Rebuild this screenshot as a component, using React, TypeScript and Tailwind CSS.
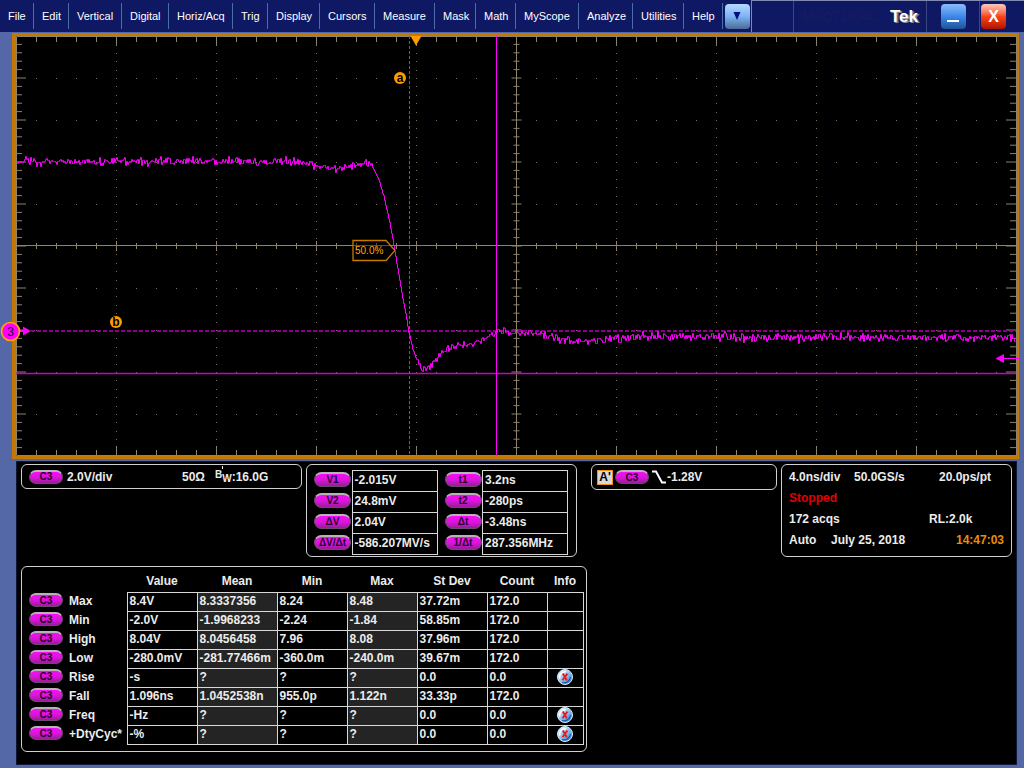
import type { ReactNode } from 'react';

const MENU: [string, string][] = [
  ['File', 'w-[34px]'],
  ['Edit', 'w-[35px]'],
  ['Vertical', 'w-[53px]'],
  ['Digital', 'w-[47px]'],
  ['Horiz/Acq', 'w-[64px]'],
  ['Trig', 'w-[35px]'],
  ['Display', 'w-[52px]'],
  ['Cursors', 'w-[55px]'],
  ['Measure', 'w-[60px]'],
  ['Mask', 'w-[41px]'],
  ['Math', 'w-[40px]'],
  ['MyScope', 'w-[63px]'],
  ['Analyze', 'w-[54px]'],
  ['Utilities', 'w-[51px]'],
  ['Help', 'w-[39px]'],
];

const HEADERS: [string, string][] = [
  ['Value', 'w-[70px]'],
  ['Mean', 'w-[80px]'],
  ['Min', 'w-[70px]'],
  ['Max', 'w-[70px]'],
  ['St Dev', 'w-[70px]'],
  ['Count', 'w-[60px]'],
];

const ROWS: { name: string; cells: string[]; info?: boolean }[] = [
  { name: 'Max', cells: ['8.4V', '8.3337356', '8.24', '8.48', '37.72m', '172.0'] },
  { name: 'Min', cells: ['-2.0V', '-1.9968233', '-2.24', '-1.84', '58.85m', '172.0'] },
  { name: 'High', cells: ['8.04V', '8.0456458', '7.96', '8.08', '37.96m', '172.0'] },
  { name: 'Low', cells: ['-280.0mV', '-281.77466m', '-360.0m', '-240.0m', '39.67m', '172.0'] },
  { name: 'Rise', cells: ['-s', '?', '?', '?', '0.0', '0.0'], info: true },
  { name: 'Fall', cells: ['1.096ns', '1.0452538n', '955.0p', '1.122n', '33.33p', '172.0'] },
  { name: 'Freq', cells: ['-Hz', '?', '?', '?', '0.0', '0.0'], info: true },
  { name: '+DtyCyc*', cells: ['-%', '?', '?', '?', '0.0', '0.0'], info: true },
];

/* Graticule: 10 x 10 divisions, 100 x 42 units each, 5 minor ticks per division. */
function graticule() {
  let ticks = '';
  let dots = '';
  for (let i = 1; i < 50; i++) {
    const x = i * 20 + 0.5;
    const long = i % 5 === 0;
    const edge = long ? 10 : 6;
    const mid = long ? 5 : 3;
    ticks += `M${x} 0V${edge}M${x} ${420 - edge}V420M${x} ${210 - mid}V${210 + mid}`;
    const y = Math.round(i * 84) / 10;
    const side = long ? 10 : 6;
    const cm = long ? 5 : 3;
    ticks += `M0 ${y}H${side}M${1000 - side} ${y}H1000M${500.5 - cm} ${y}H${500.5 + cm}`;
  }
  for (let r = 1; r < 10; r++) {
    if (r === 5) continue;
    for (let i = 1; i < 50; i++) dots += `M${i * 20} ${r * 42 + 0.5}h1`;
  }
  for (let c = 1; c < 10; c++) {
    if (c === 5) continue;
    for (let i = 1; i < 50; i++) dots += `M${c * 100} ${Math.round(i * 8.4) + 0.5}h1`;
  }
  return { ticks, dots };
}

const SHAPE: [number, number][] = [
  [0, 125], [284, 125], [300, 129], [318, 132], [334, 129], [350, 127], [357, 131], [363, 143],
  [368, 160], [374, 186], [379, 214], [384, 244], [389, 273], [393, 295], [397, 313],
  [402, 326], [409, 334], [416, 328], [429, 314], [444, 309], [464, 305], [474, 300],
  [482, 296], [514, 295], [529, 300], [554, 304], [584, 304], [624, 300], [700, 301], [1000, 301],
];

function waveform() {
  let seed = 11;
  const rand = () => {
    seed = (seed * 1103515245 + 12345) % 2147483648;
    return seed / 2147483648;
  };
  let s = 0;
  let d = '';
  for (let x = 1; x < 1000; x++) {
    while (s < SHAPE.length - 2 && SHAPE[s + 1][0] < x) s++;
    const [x0, y0] = SHAPE[s];
    const [x1, y1] = SHAPE[s + 1];
    const base = y0 + ((y1 - y0) * (x - x0)) / (x1 - x0);
    const steep = x > 357 && x < 402;
    const n = (rand() + rand() + rand() - 1.5) * (steep ? 1 : 4);
    const spike = !steep && rand() > 0.97 ? (rand() - 0.5) * 7 : 0;
    const y = Math.round(base + n + spike) + 0.5;
    d += x === 1 ? `M1.5 ${y}` : `V${y}H${x + 0.5}`;
  }
  return d;
}

const GRID = graticule();
const TRACE = waveform();

function Pill({ children, wide = false }: { children: ReactNode; wide?: boolean }) {
  return (
    <span
      className={`flex items-center justify-center rounded-full border border-t-2 border-[#6b4a6b] border-t-[#b9b3b9] bg-linear-to-b from-[#f80cf8] via-[#dc14dc] to-[#9a1a9a] text-[10px] leading-none font-bold text-[#240028] ${
        wide ? 'h-[15px] w-[37px]' : 'h-[14px] w-[34px]'
      }`}
    >
      {children}
    </span>
  );
}

function InfoIcon() {
  return (
    <svg viewBox="0 0 16 16" className="mx-auto block size-4" role="img" aria-label="Warning">
      <defs>
        <linearGradient id="info" x1="0" y1="0" x2="1" y2="1">
          <stop offset="0" stopColor="#ffffff" />
          <stop offset="0.4" stopColor="#9fd0f5" />
          <stop offset="1" stopColor="#1f6fd0" />
        </linearGradient>
      </defs>
      <circle cx="8" cy="8" r="7.5" fill="url(#info)" stroke="#dcecfb" />
      <path d="M2.8 9.5A5.4 5.4 0 0 1 9 2.8" stroke="#fff" strokeWidth="1.4" fill="none" />
      <path d="M5 13.5a6.5 6.5 0 0 0 8.500-5.500" stroke="#1557a8" strokeWidth="1.2" fill="none" />
      <path d="M5.8 4.6L9.8 11.2M10.4 4.6L5.4 11.2" stroke="#f01818" strokeWidth="1.9" />
    </svg>
  );
}

function Readouts({ items }: { items: [string, string][] }) {
  return (
    <table className="border-collapse">
      <tbody>
        {items.map(([label, value]) => (
          <tr key={label} className="h-[21px]">
            <th scope="row" className="w-[38px] p-0 pb-[3px] align-middle">
              <Pill wide>{label}</Pill>
            </th>
            <td className="w-[85px] border border-[#d8d8d8] p-0 pb-0.5 pl-0.5 text-left">{value}</td>
          </tr>
        ))}
      </tbody>
    </table>
  );
}

function Screen() {
  return (
    <svg viewBox="0 0 1000 420" className="block h-auto w-full overflow-visible bg-black" role="img" aria-label="Channel 3 waveform">
      <path d={GRID.ticks} stroke="#8f836b" fill="none" />
      <path d={GRID.dots} stroke="#7a705c" fill="none" />
      <path d="M0 209.5H1000M500.5 0V420" stroke="#8f836b" fill="none" />
      <path d="M0.5 0.5H1000.5V419.5H0.5Z" stroke="#8f836b" fill="none" />

      <path d="M15 295H1000" stroke="#8c008c" strokeWidth="2" strokeDasharray="4 2" />
      <path d="M0 337.5H1000" stroke="#c800c8" strokeWidth="1.4" />
      <path d="M480.5 0V420" stroke="#ff00ff" />
      <path d="M393.5 0V420" stroke="#f000f0" strokeDasharray="3 2" />
      <path d={TRACE} stroke="#f000f0" fill="none" />

      <path d="M394.5 0H405.5L400 9.5Z" fill="#ff9c00" />
      <circle cx="384" cy="42" r="6" fill="#ff9c00" />
      <text x="384" y="46" textAnchor="middle" className="text-[12px] font-bold" fill="#000">a</text>
      <circle cx="100" cy="286" r="6" fill="#ff9c00" />
      <text x="100" y="290" textAnchor="middle" className="text-[12px] font-bold" fill="#000">b</text>

      <path d="M337 204.5H370L379 214.5L370 224.5H337Z" stroke="#c87800" strokeWidth="1.3" fill="#000" fillOpacity="0.4" />
      <text x="339" y="218" className="text-[10px]" fill="#ffa500">50.0%</text>

      <path d="M4 295H9" stroke="#ff00ff" strokeWidth="2" />
      <path d="M7 290.5V299.5L15 295Z" fill="#ff00ff" />
      <circle cx="-5.5" cy="295.5" r="9" fill="#ff00ff" stroke="#ffa500" strokeWidth="1.7" />
      <text x="-5.5" y="299.5" textAnchor="middle" className="text-[12px]" fill="#200020">3</text>
      <path d="M1003 322.5H985" stroke="#ff00ff" />
      <path d="M979.5 322.5L988 318V327Z" fill="#ff00ff" />
    </svg>
  );
}

export default function App() {
  return (
    <div className="min-h-screen bg-[#5468a8] pb-[3px] font-['Liberation_Sans',Arial,sans-serif] text-[12px] leading-4 text-[#ececec]">
      <header className="flex h-8 items-stretch bg-[#0f1863] text-[11px] text-white">
        <nav className="flex items-center">
          {MENU.map(([label, width]) => (
            <button
              key={label}
              type="button"
              className={`${width} h-[26px] shrink-0 border-r border-[#4c6ea8] pl-2 text-left whitespace-nowrap`}
            >
              {label}
            </button>
          ))}
        </nav>
        <div className="flex w-7 items-center justify-center">
          <button
            type="button"
            aria-label="More menus"
            className="flex size-[25px] items-center justify-center rounded-sm bg-linear-to-b from-[#b4d8fc] via-[#7cb4f4] to-[#4c6c94]"
          >
            <svg viewBox="0 0 8 8" className="size-2">
              <path d="M0.500 0H7.500L4 8Z" fill="#00107c" />
            </svg>
          </button>
        </div>
        <div className="flex flex-1 items-stretch border-t border-l border-[#8088b0]">
          <div className="w-[42px] border-r border-[#3d477f]" />
          <div className="flex flex-1 items-center justify-end gap-3 border-r border-[#3d477f] pr-2">
            <span className="text-[13px] text-[#171d5e]">MSO71604C</span>
            <span className="text-[17px] font-bold [text-shadow:1px_1px_0_#8a8a8a,2px_1px_0_#6a6a7a]">Tek</span>
          </div>
          <div className="flex w-[53px] items-center justify-center border-r border-[#3d477f]">
            <button
              type="button"
              aria-label="Minimize"
              className="flex size-[25px] items-end justify-center rounded-sm bg-linear-to-b from-[#8cbcf8] via-[#3c88ec] to-[#1c5496] pb-[7px]"
            >
              <span className="h-0.5 w-3 bg-white" />
            </button>
          </div>
          <div className="flex w-11 items-center pl-px">
            <button
              type="button"
              aria-label="Close"
              className="flex size-[25px] items-center justify-center rounded-sm bg-linear-to-b from-[#fcc8bc] via-[#f84418] to-[#b01000] text-[16px] font-bold"
            >
              X
            </button>
          </div>
        </div>
      </header>

      <main>
        <section className="mt-px mr-[5px] ml-3 border-[3px] border-l-4 border-[#c47804]">
          <Screen />
        </section>

        <section className="mt-0.5 mr-[7px] ml-4 flex flex-col gap-[9px] border border-[#101838] bg-black px-1 pt-0.5 pb-3 font-bold">
          <div className="flex items-start">
            <div className="flex h-[25px] w-[281px] items-center rounded-md border border-[#d0d0d0] pl-[7px]">
              <Pill>C3</Pill>
              <span className="ml-1 w-[115px]">2.0V/div</span>
              <span>50Ω</span>
              <span className="ml-[10px] flex items-center">
                <span className="pb-1 text-[10px]">B</span>
                <span className="relative pt-[5px] text-[10px]">
                  <span className="absolute top-0 left-0 h-[3px] w-px bg-[#ececec]" />
                  W
                </span>
                :16.0G
              </span>
            </div>

            <div className="ml-1 flex w-[271px] gap-[7px] rounded-md border border-[#d0d0d0] pt-[5px] pb-px pl-[7px]">
              <Readouts items={[['V1', '-2.015V'], ['V2', '24.8mV'], ['ΔV', '2.04V'], ['ΔV/Δt', '-586.207MV/s']]} />
              <Readouts items={[['t1', '3.2ns'], ['t2', '-280ps'], ['Δt', '-3.48ns'], ['1/Δt', '287.356MHz']]} />
            </div>

            <div className="ml-[14px] flex h-[26px] w-[186px] items-center rounded-md border border-[#d0d0d0] pl-[5px]">
              <span className="flex h-[15px] w-4 items-center justify-center border border-[#f0901c] bg-[#d8d8d8] text-[12px] text-black">A'</span>
              <span className="ml-0.5"><Pill>C3</Pill></span>
              <svg viewBox="0 0 16 14" className="ml-0.5 h-[14px] w-4" aria-hidden="true">
                <path d="M1 1.5H5L11 12.5H15" stroke="#fff" strokeWidth="2" fill="none" />
              </svg>
              <span>-1.28V</span>
            </div>

            <div className="ml-1 flex flex-1 flex-col gap-[5px] rounded-md border border-[#d0d0d0] px-[7px] pt-1 pb-2">
              <div className="flex">
                <span className="w-[65px]">4.0ns/div</span>
                <span className="w-[85px]">50.0GS/s</span>
                <span>20.0ps/pt</span>
              </div>
              <div className="text-[#e00000]">Stopped</div>
              <div className="flex">
                <span className="w-[140px]">172 acqs</span>
                <span>RL:2.0k</span>
              </div>
              <div className="flex">
                <span className="w-[42px]">Auto</span>
                <span className="flex-1">July 25, 2018</span>
                <span className="text-[#e88c0c]">14:47:03</span>
              </div>
            </div>
          </div>

          <div className="w-[566px] rounded-md border border-[#d0d0d0] pt-[3px] pb-[6px] pl-[7px]">
            <table className="table-fixed border-collapse">
              <thead>
                <tr className="h-[22px]">
                  <td className="w-[40px] p-0" />
                  <td className="w-[58px] p-0" />
                  {HEADERS.map(([label, width]) => (
                    <th key={label} scope="col" className={`${width} p-0 text-center`}>
                      {label}
                    </th>
                  ))}
                  <th scope="col" className="w-[36px] p-0 text-center">Info</th>
                </tr>
              </thead>
              <tbody>
                {ROWS.map((row) => (
                  <tr key={row.name} className="h-[19px]">
                    <td className="p-0 pb-[3px]"><Pill>C3</Pill></td>
                    <th scope="row" className="p-0 pb-0.5 text-left whitespace-nowrap">{row.name}</th>
                    {row.cells.map((cell, i) => (
                      <td
                        key={i}
                        className={`border border-[#d8d8d8] p-0 pb-0.5 pl-0.5 whitespace-nowrap ${i === 1 || i === 3 ? 'bg-[#242424]' : ''}`}
                      >
                        {cell}
                      </td>
                    ))}
                    <td className="border border-[#d8d8d8] p-0 pb-px">{row.info && <InfoIcon />}</td>
                  </tr>
                ))}
              </tbody>
            </table>
          </div>
        </section>
      </main>
    </div>
  );
}
